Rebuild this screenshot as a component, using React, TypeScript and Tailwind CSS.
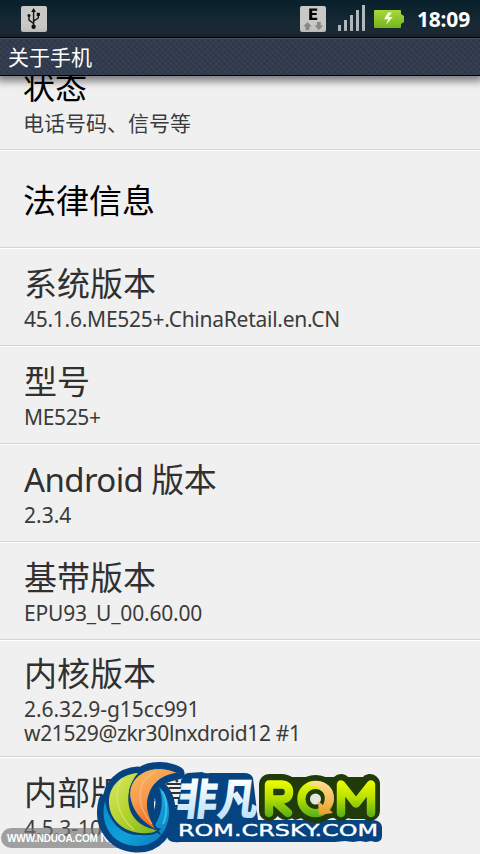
import clsx from "clsx"

const rows = [
  { title: "系统版本", lines: ["45.1.6.ME525+.ChinaRetail.en.CN"], height: "h-[98px]", tracking: "tracking-[-0.26px]" },
  { title: "型号", lines: ["ME525+"], height: "h-[98px]", tracking: "tracking-[-0.35px]" },
  { title: "Android 版本", lines: ["2.3.4"], height: "h-[98px]", latin: true },
  { title: "基带版本", lines: ["EPU93_U_00.60.00"], height: "h-[98px]", tracking: "tracking-[-0.18px]" },
  { title: "内核版本", lines: ["2.6.32.9-g15cc991", "w21529@zkr30lnxdroid12 #1"], height: "h-[117px]", tight: true, tracking: "tracking-[-0.08px] [&>p+p]:tracking-[-0.36px]" },
  { title: "内部版本信息", lines: ["4.5.3-109_DPP-11"], height: "h-[98px]" },
]

function StatusBar() {
  return (
    <header className="flex h-[37px] items-center bg-linear-to-b from-[#07202b] to-[#202e39] pl-[21px] pr-[9px]">
      <svg className="h-[26px] w-[26px]" viewBox="0 0 26 26">
        <rect width="26" height="26" rx="2" fill="#c8c9c7" />
        <g fill="none" stroke="#111" strokeWidth="1.4">
          <path d="M12.6 4v17M12.6 17.5l-4.6-3.4V10M12.6 15.2l4.7-3.2V8" />
        </g>
        <path d="M12.6 2l2.4 4h-4.8z" fill="#111" />
        <circle cx="12.6" cy="20.8" r="2.2" fill="#111" />
        <circle cx="8" cy="9.6" r="1.5" fill="#111" />
        <path d="M15.7 6.8h3.2V10h-3.2z" fill="#111" />
      </svg>
      <svg className="ml-auto h-[26px] w-[26px]" viewBox="0 0 26 26">
        <rect width="26" height="26" rx="2" fill="#c8c9c7" />
        <path d="M9.2 2.5h8v2.2h-5v2.2h4.5V9h-4.5v2.7h5V14h-8z" fill="#050505" />
        <path d="M7.5 16l4.3 4.5H9.4V24H5.6v-3.5H3.2z" fill="#898989" />
        <path d="M18.8 24l-4.3-4.5h2.4V16h3.8v3.5h2.4z" fill="#898989" />
      </svg>
      <svg className="ml-3 h-[27px] w-[27px]" viewBox="0 0 27 27">
        <path d="M0 20h3v6H0zM6 15h3v11H6zM12 10h3v16h-3zM18 5h3v21h-3zM24 0h3v26h-3z" fill="#aeb8bd" />
      </svg>
      <svg className="ml-[9px] h-[18px] w-[30px]" viewBox="0 0 30 18">
        <defs>
          <linearGradient id="battery" x2="0" y2="1">
            <stop stopColor="#a4d83b" />
            <stop offset="1" stopColor="#77b51b" />
          </linearGradient>
        </defs>
        <path d="M1 0h25q1 0 1 1v3l3 2v6l-3 2v3q0 1-1 1H1q-1 0-1-1V1q0-1 1-1z" fill="url(#battery)" />
        <path d="M14 2.5l-4 6.8h4.2L11.8 15l7-8h-4.2L18 2.5z" fill="#f5ffe6" />
      </svg>
      <span className="ml-[13px] w-[54px] whitespace-nowrap pt-px text-[21px] leading-none font-bold tracking-[-0.2px] text-white">18:09</span>
    </header>
  )
}

function TitleBar() {
  return (
    <div className="relative z-10 flex h-[39px] items-center border-y border-black bg-[#303b4f] bg-[repeating-linear-gradient(45deg,#ffffff08_0_2px,transparent_2px_4px),repeating-linear-gradient(135deg,#00000012_0_2px,transparent_2px_4px)] pl-2 shadow-[inset_0_1px_#47525c,0_2px_8px_3px_#00000080]">
      <h1 className="pt-0.5 text-[21px] leading-none text-white">关于手机</h1>
    </div>
  )
}

function Summary({ lines, className }: { lines: string[]; className?: string }) {
  return (
    <div className={clsx("text-[21px] leading-6 text-[#3b3b3b]", className)}>
      {lines.map((line) => (
        <p key={line} className="whitespace-nowrap">{line}</p>
      ))}
    </div>
  )
}

function CrskyLogo() {
  return (
    <svg className="absolute left-[94px] top-[757px] h-[97px] w-[292px]" viewBox="94 757 292 97">
      <defs>
        <linearGradient id="lime" x2="1" y2="1">
          <stop stopColor="#d9e967" />
          <stop offset=".5" stopColor="#b5d32c" />
          <stop offset="1" stopColor="#7db51f" />
        </linearGradient>
        <linearGradient id="orange" x2=".5" y2="1">
          <stop stopColor="#f6bd61" />
          <stop offset=".5" stopColor="#f79a4d" />
          <stop offset="1" stopColor="#e8641c" />
        </linearGradient>
        <linearGradient id="ring" x2="1" y2="1">
          <stop stopColor="#0589c7" />
          <stop offset=".6" stopColor="#11a0d8" />
          <stop offset="1" stopColor="#0a76b8" />
        </linearGradient>
        <linearGradient id="ice" gradientUnits="userSpaceOnUse" x1="0" y1="779" x2="0" y2="819">
          <stop stopColor="#fff" />
          <stop offset="1" stopColor="#b9e2f8" />
        </linearGradient>
        <linearGradient id="rom" gradientUnits="userSpaceOnUse" x1="0" y1="780" x2="0" y2="817">
          <stop stopColor="#efff00" />
          <stop offset=".5" stopColor="#b5df00" />
          <stop offset="1" stopColor="#55ac18" />
        </linearGradient>
        <linearGradient id="gold" x2="0" y2="1">
          <stop stopColor="#ffdf94" />
          <stop offset="1" stopColor="#eb9e28" />
        </linearGradient>
        <path id="crescentRing" d="M105 801c-6 23 7 44 31 45 20 1 33-15 33-34 0-11-4-20-10-25 3 8 4 18 1 27-4 13-12 21-24 21-15-1-28-14-31-34z" />
        <path id="crescentLime" d="M138 773c-17 1-29 13-29 29 0 19 17 33 39 31 4 0 7-1 9-3-13-2-23-9-27-20-4-13-1-27 8-37z" />
        <path id="crescentOrange" d="M178 773c-10-5-25-7-36 0-10 6-15 17-11 29 4 13 13 21 25 28-7-12-11-24-7-35 4-14 15-20 29-22z" />
      </defs>
      <path d="M182 778q1-4 6-5l14-1q4 2 8 1h34q7 0 9 5l5 42h114q9 0 10 7v9q0 6-7 6l-4-1-5 1-6-1-7 1-8-1-10 1H180q-9 1-12-3-3-4-1-12 1-4 6-6-1-4 0-10 2-4 5-6-1-4 1-8 1-4 2-7-1-9 1-12z" fill="#064381" />
      <g fill="#064381" stroke="#064381" strokeWidth="13" strokeLinejoin="round">
        <use href="#crescentRing" />
        <use href="#crescentLime" />
        <use href="#crescentOrange" />
      </g>
      <use href="#crescentRing" fill="url(#ring)" />
      <path d="M162 791c5 9 6 22 1 33" fill="none" stroke="#4ccff2" strokeWidth="2" opacity=".7" />
      <g fill="#064381" stroke="#064381" strokeWidth="4">
        <use href="#crescentLime" />
        <use href="#crescentOrange" />
      </g>
      <use href="#crescentLime" fill="url(#lime)" />
      <path d="M122 778c-9 16-6 36 12 52" fill="none" stroke="#e3ef83" strokeWidth="1.5" opacity=".5" />
      <use href="#crescentOrange" fill="url(#orange)" stroke="#064381" strokeWidth="1" />
      <path d="M156 772c-20 8-21 33-4 52" fill="none" stroke="#fdc28d" strokeWidth="1.4" opacity=".6" />

      <text x="177" y="815" textLength="82" lengthAdjust="spacingAndGlyphs" transform="translate(218 799) skewX(-7) translate(-218 -799)" fontFamily="'Noto Sans CJK SC', sans-serif" fontSize="43" fontWeight="900" fill="url(#ice)">非凡</text>

      <path d="M266 777h108v42h-22l-12-2-14 2-17-3-14 4-12-6-14 5z" fill="#203b09" />
      <g fill="none" strokeLinecap="round" strokeLinejoin="round">
        <path d="M269 811v-27h12q8 0 8 7.500t-8 7.500h-8l13 11M341 811v-27l15 19 14-19v27" stroke="#203b09" strokeWidth="20" />
        <circle cx="315.500" cy="799" r="14" stroke="#203b09" strokeWidth="20" />
        <path d="M269 813v-28.500h12q8 0 8 7.500t-8 7.500h-8l15 13.500M341 813v-28.500l15 19 15-19v28.500" stroke="url(#rom)" strokeWidth="8.500" />
        <circle cx="315.500" cy="799" r="14" stroke="url(#rom)" strokeWidth="8.500" />
      </g>
      <circle cx="315.500" cy="799" r="10" fill="#203b09" />
      <circle cx="315.500" cy="799" r="5.500" fill="#e5e6e2" />
      <path d="M307 785c9-8 27-3 27 13 0 6-3 9-5 11l4 4-14 2-1-14 5 4c5-9 0-20-16-20z" fill="url(#gold)" />
      <text x="178" y="836" textLength="200" lengthAdjust="spacingAndGlyphs" fontFamily="'DejaVu Sans', sans-serif" fontSize="15.500" fill="#fff" stroke="#fff" strokeWidth=".35">ROM.CRSKY.COM</text>
    </svg>
  )
}

export default function App() {
  return (
    <main className="relative h-[854px] w-[480px] overflow-hidden bg-[#f0f0f0] font-['Noto_Sans','Noto_Sans_CJK_SC',sans-serif]">
      <StatusBar />
      <TitleBar />
      <section>
        <div className="flex h-[74px] flex-col justify-end border-b border-[#d5d5d5] pb-[14px] pl-[23px]">
          <h2 className="mb-1.5 text-[32px] leading-9 text-black">状态</h2>
          <Summary lines={["电话号码、信号等"]} />
        </div>
        <div className="flex h-[98px] items-center border-b border-[#d5d5d5] pt-1 pl-[23px] shadow-[inset_0_1px_white]">
          <h2 className="text-[33px] leading-10 text-black">法律信息</h2>
        </div>
        {rows.map((row) => (
          <div
            key={row.title}
            className={clsx(
              "border-b border-[#d5d5d5] pl-6 shadow-[inset_0_1px_white]",
              row.height,
              row.tight ? "pt-[14px]" : "pt-4",
            )}
          >
            <h2 className={clsx("mb-[3px] text-[33px] leading-10 text-[#303030]", row.latin && "tracking-[-0.6px]")}>{row.title}</h2>
            <Summary lines={row.lines} className={row.tracking} />
          </div>
        ))}
      </section>
      <div className="absolute left-px top-[828px] h-5 w-[150px] overflow-hidden rounded-l-full bg-[#777777a8] pl-1.5 font-['Liberation_Sans',sans-serif] text-[10px] leading-5 font-bold tracking-[-0.2px] whitespace-nowrap text-white">
        WWW.NDUOA.COM <span className="text-[13px]">N多网</span>
      </div>
      <CrskyLogo />
    </main>
  )
}
